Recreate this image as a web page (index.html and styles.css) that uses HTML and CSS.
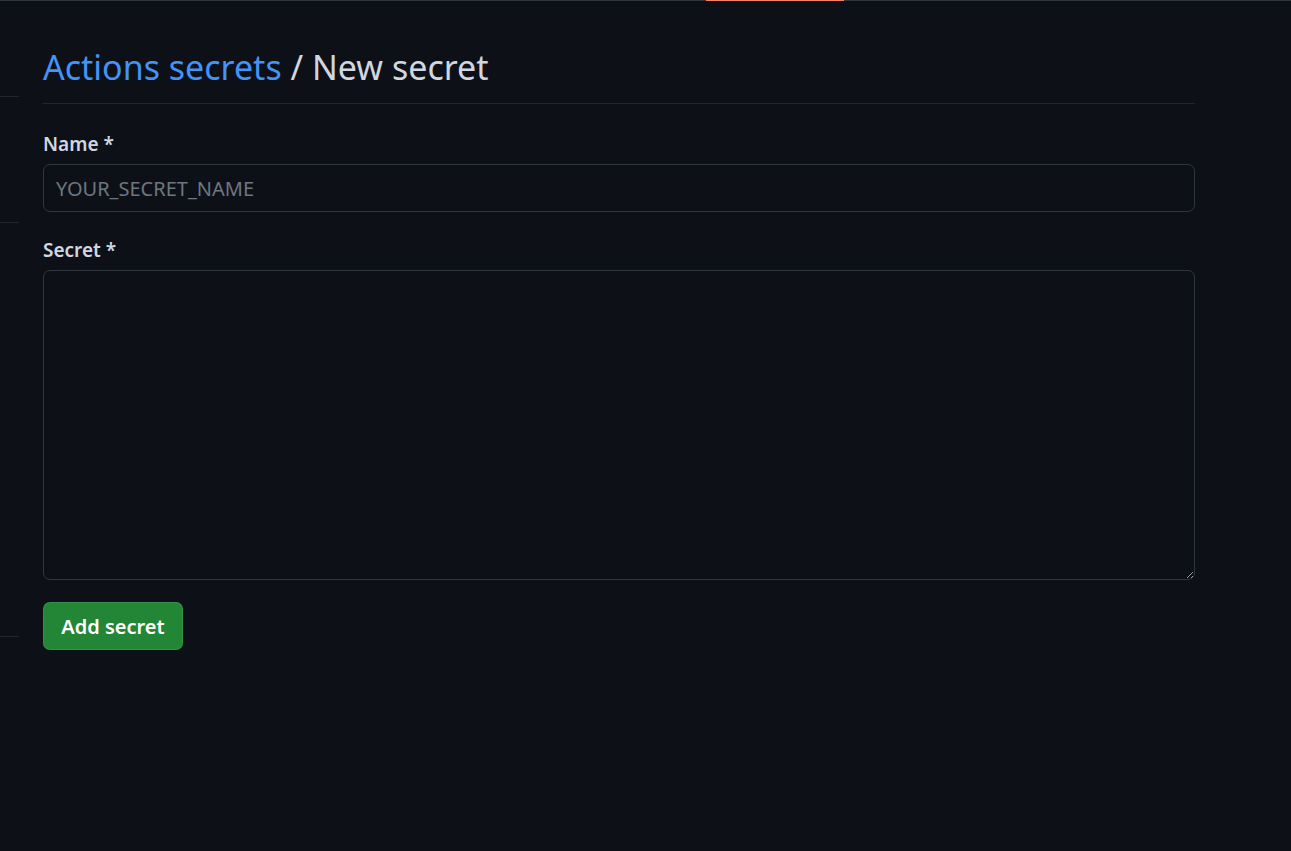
FILE: index.html
```html
<!DOCTYPE html>
<html lang="en">
<head>
<meta charset="utf-8">
<title>New secret</title>
<link rel="stylesheet" href="styles.css">
</head>
<body>
<header class="topbar"><span class="topbar-accent"></span></header>
<div class="layout">
  <nav class="sidebar">
    <div class="side-block side-a"></div>
    <div class="side-block side-b"></div>
    <div class="side-block side-c"></div>
  </nav>
  <main class="content">
    <div class="subhead">
      <h2 class="subhead-heading"><a class="crumb-link" href="#">Actions secrets</a> / New secret</h2>
    </div>
    <form class="secret-form">
      <div class="form-group">
        <label class="form-label" for="name">Name *</label>
        <input class="form-control" id="name" type="text" placeholder="YOUR_SECRET_NAME">
      </div>
      <div class="form-group form-group-last">
        <label class="form-label" for="secret">Secret *</label>
        <textarea class="form-control form-textarea" id="secret"></textarea>
      </div>
      <button class="btn-primary" type="button">Add secret</button>
    </form>
  </main>
</div>
</body>
</html>
```
FILE: styles.css
```css
html, body {
  margin: 0;
  padding: 0;
  background: #0d1117;
  height: 100%;
}
body {
  font-family: "Noto Sans", "Open Sans", sans-serif;
  color: #d1d7e0;
  overflow: hidden;
}
.topbar {
  height: 1px;
  background: #30363d;
  position: relative;
}
.topbar-accent {
  position: absolute;
  left: 706px;
  top: 0;
  width: 138px;
  height: 1px;
  background: #f78166;
}
.layout {
  display: grid;
  grid-template-columns: 19px 1152px;
  column-gap: 24px;
}
.sidebar {
  display: flex;
  flex-direction: column;
}
.side-block {
  border-bottom: 1px solid #21262d;
}
.side-a { height: 95px; }
.side-b { height: 125px; }
.side-c { height: 413px; }
.content {
  padding-top: 40px;
}
.subhead {
  border-bottom: 1px solid #21262d;
  padding-bottom: 10px;
  margin-bottom: 26px;
}
.subhead-heading {
  margin: 0;
  font-size: 34px;
  font-weight: 400;
  line-height: 52px;
  color: #d1d7e0;
}
.crumb-link {
  color: #4493f8;
  text-decoration: none;
}
.form-group {
  display: flex;
  flex-direction: column;
  margin-bottom: 24px;
}
.form-group-last {
  margin-bottom: 22px;
}
.form-label {
  font-size: 19px;
  font-weight: 600;
  line-height: 28px;
  margin-bottom: 6px;
  color: #d1d7e0;
}
.form-control {
  box-sizing: border-box;
  width: 100%;
  height: 48px;
  padding: 0 12px;
  background: #0d1117;
  border: 1px solid #30363d;
  border-radius: 7px;
  color: #d1d7e0;
  font-family: inherit;
  font-size: 20px;
  outline: none;
}
.form-control::placeholder {
  color: #6e7681;
}
.form-textarea {
  height: 310px;
  resize: vertical;
}
.btn-primary {
  box-sizing: border-box;
  height: 48px;
  width: 140px;
  background: #238636;
  border: 1px solid rgba(240, 246, 252, 0.1);
  border-radius: 7px;
  color: #ffffff;
  font-family: inherit;
  font-size: 20px;
  font-weight: 600;
  cursor: pointer;
}
```
